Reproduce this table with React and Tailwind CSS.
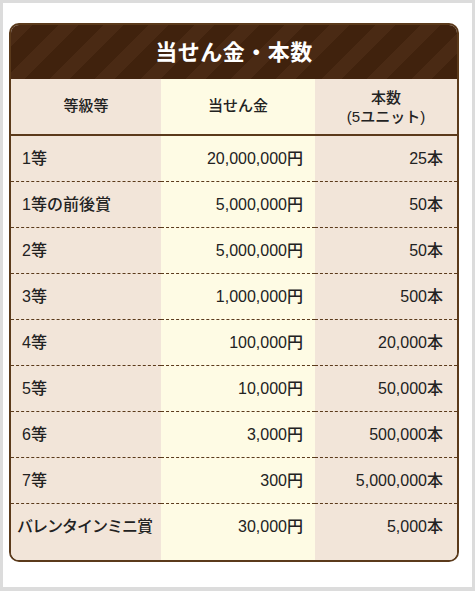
const rows = [
  { name: "1等", prize: "20,000,000円", count: "25本" },
  { name: "1等の前後賞", prize: "5,000,000円", count: "50本" },
  { name: "2等", prize: "5,000,000円", count: "50本" },
  { name: "3等", prize: "1,000,000円", count: "500本" },
  { name: "4等", prize: "100,000円", count: "20,000本" },
  { name: "5等", prize: "10,000円", count: "50,000本" },
  { name: "6等", prize: "3,000円", count: "500,000本" },
  { name: "7等", prize: "300円", count: "5,000,000本" },
  { name: "バレンタインミニ賞", prize: "30,000円", count: "5,000本" },
];

const App = () => {
  return (
    <div
      className="min-h-screen bg-[#dcdcdc] pt-[3px] pl-[3px] pr-[3px] text-[#222]"
      style={{ fontFamily: '"Liberation Sans", "Noto Sans CJK JP", sans-serif' }}
    >
      <div className="bg-white h-[584px] pt-[20px] pl-[6px]">
        <div className="w-[450px] border-2 border-[#5b3a1b] rounded-[10px] overflow-hidden">
          <div className="h-[54px] flex items-center justify-center bg-[repeating-linear-gradient(-45deg,#40220d_0px,#40220d_18px,#4a2a14_18px,#4a2a14_32px)]">
            <p className="text-white text-[22px] font-bold tracking-[0.5px]">当せん金・本数</p>
          </div>

          <div className="grid grid-cols-[150px_154px_1fr] text-[15px] font-medium border-b-2 border-[#5b3a1b]">
            <div className="bg-[#f2e5d9] h-[55px] flex items-center justify-center">等級等</div>
            <div className="bg-[#fefbe4] h-[55px] flex items-center justify-center">当せん金</div>
            <div className="bg-[#f2e5d9] h-[55px] flex flex-col items-center justify-center leading-[19px]">
              <p>本数</p>
              <p>(5ユニット)</p>
            </div>
          </div>

          {rows.map((el, i) => {
            const last = i === rows.length - 1;
            const line = last ? "" : "border-b border-dashed border-[#5b3a1b]";
            const h = last ? "h-[56px] pb-[10px]" : "h-[46px]";
            const nameCls = last ? "pl-[6px] tracking-[-1px]" : "pl-[11px]";
            return (
              <div key={i} className="grid grid-cols-[150px_154px_1fr] text-[16px] font-medium">
                <div className={`bg-[#f2e5d9] ${h} ${line} ${nameCls} flex items-center whitespace-nowrap`}>{el.name}</div>
                <div className={`bg-[#fefbe4] ${h} ${line} flex items-center justify-end pr-[12px]`}>{el.prize}</div>
                <div className={`bg-[#f2e5d9] ${h} ${line} flex items-center justify-end pr-[14px]`}>{el.count}</div>
              </div>
            );
          })}
        </div>
      </div>
    </div>
  );
};

export default App;
